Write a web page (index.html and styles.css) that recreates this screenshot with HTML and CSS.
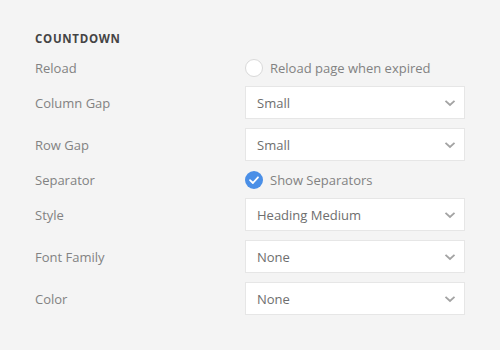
FILE: index.html
```html
<!DOCTYPE html>
<html>
<head>
<meta charset="utf-8">
<link rel="stylesheet" href="styles.css">
</head>
<body>
<div class="panel">
  <h3 class="title">COUNTDOWN</h3>
  <div class="row check-row">
    <div class="label">Reload</div>
    <div class="control">
      <span class="radio"></span>
      <span class="opt-text">Reload page when expired</span>
    </div>
  </div>
  <div class="row">
    <div class="label">Column Gap</div>
    <div class="control select"><span>Small</span><svg class="chev" width="12" height="8" viewBox="0 0 12 8"><path d="M1.5 1.8 L6 6 L10.5 1.8" fill="none" stroke="#a3a3a3" stroke-width="1.8"/></svg></div>
  </div>
  <div class="row">
    <div class="label">Row Gap</div>
    <div class="control select"><span>Small</span><svg class="chev" width="12" height="8" viewBox="0 0 12 8"><path d="M1.5 1.8 L6 6 L10.5 1.8" fill="none" stroke="#a3a3a3" stroke-width="1.8"/></svg></div>
  </div>
  <div class="row check-row">
    <div class="label">Separator</div>
    <div class="control">
      <span class="checkbox"><svg width="18" height="18" viewBox="0 0 18 18"><path d="M5 9.2 L7.9 12 L13 6.3" fill="none" stroke="#fff" stroke-width="1.8" stroke-linecap="round" stroke-linejoin="round"/></svg></span>
      <span class="opt-text">Show Separators</span>
    </div>
  </div>
  <div class="row">
    <div class="label">Style</div>
    <div class="control select"><span>Heading Medium</span><svg class="chev" width="12" height="8" viewBox="0 0 12 8"><path d="M1.5 1.8 L6 6 L10.5 1.8" fill="none" stroke="#a3a3a3" stroke-width="1.8"/></svg></div>
  </div>
  <div class="row">
    <div class="label">Font Family</div>
    <div class="control select"><span>None</span><svg class="chev" width="12" height="8" viewBox="0 0 12 8"><path d="M1.5 1.8 L6 6 L10.5 1.8" fill="none" stroke="#a3a3a3" stroke-width="1.8"/></svg></div>
  </div>
  <div class="row">
    <div class="label">Color</div>
    <div class="control select"><span>None</span><svg class="chev" width="12" height="8" viewBox="0 0 12 8"><path d="M1.5 1.8 L6 6 L10.5 1.8" fill="none" stroke="#a3a3a3" stroke-width="1.8"/></svg></div>
  </div>
</div>
</body>
</html>
```
FILE: styles.css
```css
html, body {
  margin: 0;
  padding: 0;
  background: #f4f4f4;
  width: 500px;
  height: 350px;
  overflow: hidden;
}
.panel {
  padding: 30px 35px 0 35px;
  font-family: "Open Sans", sans-serif;
}
.title {
  margin: 0 0 10px 0;
  font-family: "Open Sans", sans-serif;
  font-weight: 700;
  font-size: 11.5px;
  line-height: 18px;
  letter-spacing: 0.7px;
  color: #444;
}
.row {
  display: flex;
  align-items: center;
  margin-bottom: 9px;
}
.check-row {
  height: 19px;
}
.label {
  width: 210px;
  font-size: 13px;
  color: #828282;
}
.control {
  width: 220px;
  display: flex;
  align-items: center;
  font-size: 13px;
  color: #828282;
}
.select {
  box-sizing: border-box;
  height: 33px;
  background: #fff;
  border: 1px solid #e6e6e6;
  padding: 0 8px 0 11px;
  justify-content: space-between;
  color: #6e6e6e;
}
.radio {
  box-sizing: border-box;
  width: 18px;
  height: 18px;
  border-radius: 50%;
  border: 1px solid #d9d9d9;
  background: #fff;
  margin-right: 7px;
}
.checkbox {
  width: 18px;
  height: 18px;
  border-radius: 50%;
  background: #4a8fe7;
  margin-right: 7px;
  display: flex;
}
.opt-text {
  color: #828282;
}
```
